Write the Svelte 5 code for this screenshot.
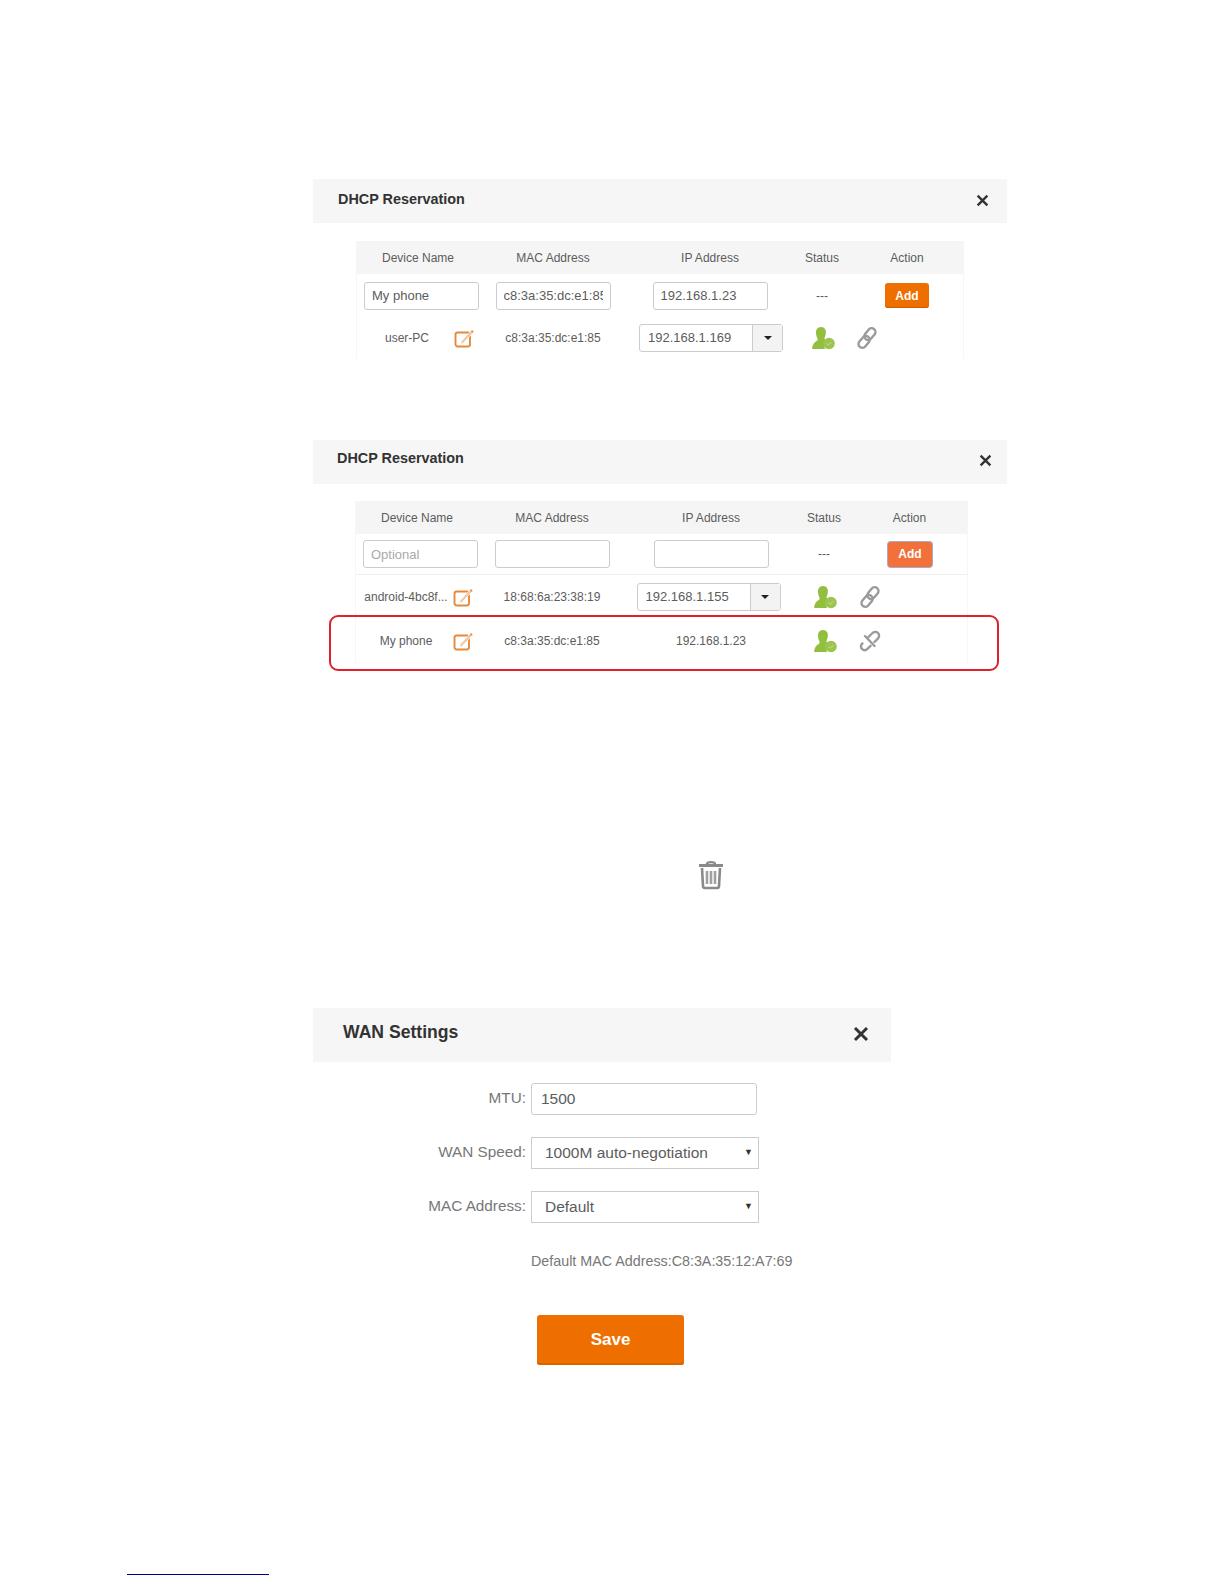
<script>
  const first = { name: "My phone", mac: "c8:3a:35:dc:e1:85", ip: "192.168.1.23", namePh: "" };
  const second = { name: "", mac: "", ip: "", namePh: "Optional" };
</script>

{#snippet editIcon()}
  <svg class="edit" width="21" height="20" viewBox="0 0 21 20" fill="none">
    <rect x="1.5" y="4.5" width="14.5" height="14" rx="2.2" stroke="#e58a3c" stroke-width="1.9" />
    <path d="M6.5 14 L17.5 2 L20 4 L8.5 16 Z" fill="#fff" />
    <path d="M7.5 13.5 L17.5 2.6 L19.2 4.2 L8.8 15 L7 15.4 Z" fill="#f2c6a2" />
    <path d="M17.5 2.6 L19.2 4.2" stroke="#e58a3c" stroke-width="1.5" />
  </svg>
{/snippet}

{#snippet personIcon()}
  <svg class="person" width="24" height="24" viewBox="0 0 24 24">
    <path d="M10 1 C13.8 1 15.4 4 14.8 7.4 C14.4 9.6 13.8 11 13.6 12 C13.4 13 13.8 13.6 15 14.2 C12.6 16 12.4 20 14.4 23 L2.4 23 C1.4 23 1 22.4 1.2 21.4 C1.8 17.6 4.2 16 6 14.8 C6.8 14 6.8 13 6.2 12 C5.6 10.8 5.2 9.2 5 7.4 C4.6 4 6.2 1 10 1 Z" fill="#93bf3f" />
    <circle cx="18" cy="17.5" r="5.8" fill="#9cc44f" />
    <path d="M15.6 17.6 L17.4 19.2 L20.4 16" stroke="#c7dd98" stroke-width="1" fill="none" />
  </svg>
{/snippet}

{#snippet linkIcon(broken)}
  <svg class="link" width="22" height="22" viewBox="0 0 22 22" fill="none" stroke="#9a9a9a" stroke-width="2.4">
    {#if broken}
      <path d="M13 3.5 C15 1.5 17.5 1.5 19 3 C20.5 4.5 20.5 7 18.6 8.9 L15.5 12 M3.4 13.4 C1.5 15.3 1.5 17.6 3 19 C4.5 20.5 6.8 20.5 8.7 18.6 L11.5 15.8 M6 6 L15.5 16 M13 3.5 L8.5 8" stroke-linecap="round" />
    {:else}
      <rect x="10.2" y="0.6" width="7.6" height="13" rx="3.8" transform="rotate(40 14 7)" />
      <rect x="4.2" y="8.4" width="7.6" height="13" rx="3.8" transform="rotate(40 8 15)" />
    {/if}
  </svg>
{/snippet}

{#snippet closeIcon(size)}
  <svg class="close" width={size} height={size} viewBox="0 0 12 12" stroke="#333" stroke-width="2.2">
    <path d="M1.5 1.5 L10.5 10.5 M10.5 1.5 L1.5 10.5" />
  </svg>
{/snippet}

{#snippet tableHead()}
  <div class="row head">
    <span>Device Name</span><span>MAC Address</span><span>IP Address</span><span>Status</span><span>Action</span>
  </div>
{/snippet}

{#snippet addRow(v, btnClass)}
  <div class="row inputs">
    <input class="txt" value={v.name} placeholder={v.namePh} readonly />
    <input class="txt" value={v.mac} readonly />
    <input class="txt ipin" value={v.ip} readonly />
    <span>---</span>
    <button class={btnClass}>Add</button>
  </div>
{/snippet}

{#snippet ipPicker(ip)}
  <div class="picker">
    <span class="picker-val">{ip}</span>
    <span class="picker-btn"><i class="caret"></i></span>
  </div>
{/snippet}

{#snippet device(name, mac, ip, picker, broken)}
  <div class="row dev">
    <div class="namecell"><span class="devname">{name}</span>{@render editIcon()}</div>
    <span>{mac}</span>
    {#if picker}{@render ipPicker(ip)}{:else}<span>{ip}</span>{/if}
    {@render personIcon()}
    <div class="linkcell">{@render linkIcon(broken)}</div>
  </div>
{/snippet}

<main class="page">
  <section class="panel one">
    <header class="bar">
      <h2>DHCP Reservation</h2>
      {@render closeIcon(13)}
    </header>
    <div class="table">
      {@render tableHead()}
      {@render addRow(first, "add")}
      {@render device("user-PC", "c8:3a:35:dc:e1:85", "192.168.1.169", true, false)}
    </div>
  </section>

  <section class="panel two">
    <header class="bar">
      <h2>DHCP Reservation</h2>
      {@render closeIcon(13)}
    </header>
    <div class="table">
      {@render tableHead()}
      {@render addRow(second, "add focused")}
      {@render device("android-4bc8f...", "18:68:6a:23:38:19", "192.168.1.155", true, false)}
      {@render device("My phone", "c8:3a:35:dc:e1:85", "192.168.1.23", false, true)}
    </div>
    <div class="callout"></div>
  </section>

  <div class="trash">
    <svg width="28" height="30" viewBox="0 0 28 30" fill="none" stroke="#8a8a8a">
      <path d="M10 4 C10 1.5 18 1.5 18 4" stroke-width="2.4" />
      <path d="M2 5.5 H26" stroke-width="3" />
      <path d="M5 8 L6 26 C6 27.5 7 28 8 28 H20 C21 28 22 27.5 22 26 L23 8" stroke-width="2.6" />
      <path d="M10 11 V24 M14 11 V24 M18 11 V24" stroke-width="2.6" stroke="#a0a0a0" />
    </svg>
  </div>

  <section class="wan">
    <header class="bar wanbar">
      <h2>WAN Settings</h2>
      {@render closeIcon(16)}
    </header>
    <div class="field">
      <label for="mtu">MTU:</label>
      <input id="mtu" class="wan-in" value="1500" readonly />
    </div>
    <div class="field">
      <span class="lbl">WAN Speed:</span>
      <div class="wan-sel">1000M auto-negotiation<i class="tri">▼</i></div>
    </div>
    <div class="field">
      <span class="lbl">MAC Address:</span>
      <div class="wan-sel">Default<i class="tri">▼</i></div>
    </div>
    <p class="note">Default MAC Address:C8:3A:35:12:A7:69</p>
    <button class="save">Save</button>
  </section>

  <div class="footlink"></div>
</main>

<style>
  :global(body) {
    margin: 0;
    background: #fff;
  }

  .page {
    height: 1584px;
    box-sizing: border-box;
    padding: 179px 0 0 313px;
    font-family: "Liberation Sans", Arial, sans-serif;
    color: #5c5c5c;
    position: relative;
    overflow: hidden;
  }

  .panel {
    width: 694px;
    position: relative;
  }

  .two {
    margin-top: 81px;
  }

  .bar {
    height: 44px;
    background: #f6f6f6;
    display: flex;
    justify-content: space-between;
    padding: 0 18px 0 25px;
    align-items: center;
  }

  .bar h2 {
    margin: 0 0 4px;
    font-size: 14.4px;
    font-weight: bold;
    color: #333;
  }

  .close {
    margin-bottom: 1px;
  }

  .two .bar {
    padding: 0 15px 0 24px;
  }

  .two .bar h2 {
    margin-bottom: 8px;
  }

  .two .close {
    margin-bottom: 4px;
  }

  .table {
    margin: 18px 0 0 43px;
    width: 608px;
    font-size: 12px;
    border-left: 1px solid #f6f6f6;
    border-right: 1px solid #f6f6f6;
    box-sizing: border-box;
  }

  .two .table {
    margin: 17px 0 0 42px;
    width: 613px;
  }

  .row {
    display: grid;
    grid-template-columns: 122px 148px 166px 58px 1fr;
    justify-items: center;
    align-items: center;
  }

  .two .row {
    grid-template-columns: 122px 148px 170px 56px 1fr;
  }

  .head {
    height: 33px;
    background: #f5f5f5;
  }

  .inputs {
    height: 43px;
  }

  .two .inputs {
    height: 41px;
    border-bottom: 1px solid #f0f0f0;
    box-sizing: border-box;
  }

  .one .dev {
    height: 42px;
    margin-bottom: 2px;
  }

  .two .dev {
    height: 44px;
  }

  .txt {
    width: 115px;
    height: 28px;
    box-sizing: border-box;
    border: 1px solid #ccc;
    border-radius: 3px;
    padding: 0 7px;
    font: 13px "Liberation Sans", Arial, sans-serif;
    color: #5c5c5c;
    outline: none;
  }

  .row .txt:first-child {
    justify-self: end;
  }

  .txt::placeholder {
    color: #aaa;
  }

  .add {
    width: 44px;
    height: 25px;
    border: 0;
    border-radius: 3px;
    background: #ee6f00;
    color: #fff;
    font: bold 12px "Liberation Sans", Arial, sans-serif;
    padding: 0;
    box-shadow: inset 0 -1px 0 #c95f00;
  }

  .focused {
    margin-left: 1px;
    background: #f2703a;
    box-shadow: 0 0 0 1px #a9aac9;
  }

  .namecell {
    justify-self: start;
    display: flex;
    align-items: center;
  }

  .devname {
    width: 84px;
    margin-left: 8px;
    text-align: center;
    white-space: nowrap;
  }

  .edit {
    margin-left: 5px;
    flex: none;
  }

  .one .person {
    margin-left: 2px;
  }

  .two .person {
    margin-left: 2px;
  }

  .linkcell {
    justify-self: start;
    padding-left: 5px;
    display: flex;
  }

  .two .linkcell {
    padding-left: 7px;
  }

  .picker {
    width: 144px;
    height: 28px;
    box-sizing: border-box;
    border: 1px solid #ccc;
    border-radius: 3px;
    display: flex;
    font-size: 13px;
  }

  .one .picker {
    margin-left: 2px;
  }

  .two .picker {
    margin-right: 5px;
  }

  .picker-val {
    flex: 1;
    line-height: 26px;
    padding-left: 8px;
  }

  .picker-btn {
    width: 29px;
    background: #f3f3f3;
    border-left: 1px solid #ccc;
    display: flex;
    align-items: center;
    justify-content: center;
  }

  .caret {
    border: 4px solid transparent;
    border-top-color: #222;
    border-bottom: 0;
  }

  .callout {
    position: absolute;
    left: 16px;
    top: 175px;
    width: 670px;
    height: 56px;
    box-sizing: border-box;
    border: 2px solid #e0202a;
    border-radius: 9px;
  }

  .trash {
    margin: 197px 0 0 384px;
    height: 30px;
  }

  .wan {
    width: 578px;
    margin-top: 118px;
    font-size: 15.3px;
  }

  .wanbar {
    height: 54px;
    padding: 0 22px 0 30px;
  }

  .wanbar h2 {
    font-size: 17.6px;
    margin-bottom: 6px;
  }

  .wanbar .close {
    margin-bottom: 2px;
  }

  .field {
    display: flex;
    align-items: center;
    height: 32px;
    margin-top: 22px;
  }

  .wanbar + .field {
    margin-top: 21px;
  }

  .field label,
  .lbl {
    width: 213px;
    text-align: right;
    color: #777;
    margin-right: 5px;
    padding-bottom: 3px;
  }

  .wan-in {
    width: 226px;
    height: 32px;
    box-sizing: border-box;
    border: 1px solid #ccc;
    border-radius: 3px;
    padding: 0 9px;
    font: 15.5px "Liberation Sans", Arial, sans-serif;
    color: #5c5c5c;
    outline: none;
  }

  .wan-sel {
    width: 228px;
    height: 32px;
    box-sizing: border-box;
    border: 1px solid #ccc;
    padding: 0 13px;
    line-height: 30px;
    font-size: 15.5px;
    color: #5c5c5c;
    position: relative;
  }

  .tri {
    position: absolute;
    right: 5px;
    top: -1px;
    font-size: 9px;
    font-style: normal;
    color: #333;
  }

  .note {
    margin: 28px 0 0 218px;
    font-size: 14.3px;
    line-height: 20px;
    color: #777;
  }

  .save {
    display: block;
    margin: 44px 0 0 224px;
    width: 147px;
    height: 50px;
    border: 0;
    border-radius: 3px;
    background: #ee6f00;
    box-shadow: inset 0 -2px 0 #d96400;
    color: #fff;
    font: bold 17px "Liberation Sans", Arial, sans-serif;
  }

  .footlink {
    position: absolute;
    left: 127px;
    top: 1574px;
    width: 142px;
    height: 1px;
    background: #00008b;
  }
</style>
